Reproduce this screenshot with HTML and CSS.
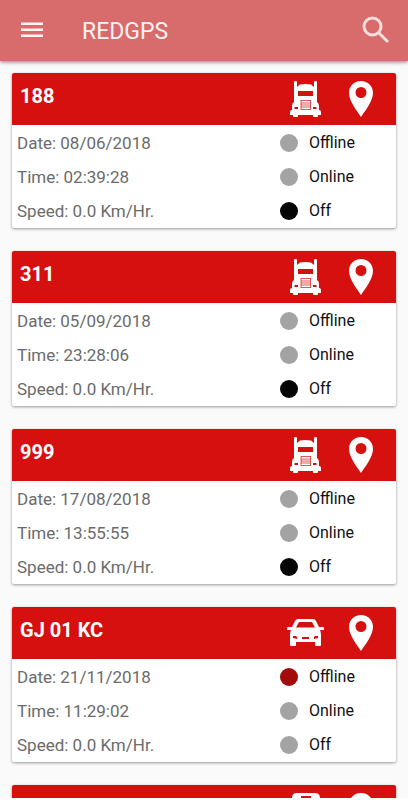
FILE: index.html
```
<!DOCTYPE html>
<html lang="en">
<head>
    <meta charset="UTF-8">
    <meta name="viewport" content="width=device-width, initial-scale=1.0">
    <title>REDGPS</title>
    <link rel="stylesheet" href="styles.css">
</head>
<body>
    <!-- Shared icons -->
    <svg class="icon-sprite" aria-hidden="true">
        <symbol id="icon-truck" viewBox="0 0 31 36">
            <path fill-rule="evenodd" d="M4 1Q4 0 5.500 0T7 1V6L10 3.500Q15.500 2.500 21 3.500L24 6V1Q24 0 25.500 0T27 1V21Q29 22 29 25V29Q31 29 31 31V34H28V35Q28 36 27 36H24Q23 36 23 35V34H8V35Q8 36 7 36H4Q3 36 3 35V34H0V31Q0 29 2 29V25Q2 22 4 21ZM8 10V15H23V10ZM4.500 26V28H8V26ZM23 26V28H26.500V26Z"/>
            <path class="grille" d="M11 19.500H20.500M11 22H20.500M11 24H20.500M11 26H20.500M11 28.500H20.500M11 19V29M20.500 19V29"/>
        </symbol>
        <symbol id="icon-car" viewBox="0 0 37 28">
            <path fill-rule="evenodd" d="M11 0H26Q28 0 29 2L32 8L33 8H36Q37 8 37 9V11H33Q34 13 34 16V26Q34 27 33 27H29Q28 27 28 26V23H9V26Q9 27 8 27H4Q3 27 3 26V16Q3 13 4 11H0V9Q0 8 1 8H5L8 2Q9 0 11 0ZM12 3L9 8.500H28L25 3ZM6 17V19L10 20Q11 18 9 17ZM28 17Q26 18 27 20L31 19V17ZM15 18V20H22V18Z"/>
        </symbol>
        <symbol id="icon-bus" viewBox="0 0 28 36">
            <path fill-rule="evenodd" d="M5 0H23Q28 0 28 5V30H26V34Q26 36 24 36T22 34V31H6V34Q6 36 4 36T2 34V30H0V5Q0 0 5 0ZM9 3V5H19V3ZM4 8V18H24V8ZM4 23V26H8V23ZM20 23V26H24V23Z"/>
        </symbol>
        <symbol id="icon-pin" viewBox="0 0 24 36">
            <path fill-rule="evenodd" d="M12 0C5 0 0 5 0 12C0 20 8 30 12 36C16 30 24 20 24 12C24 5 19 0 12 0ZM12 6A5.500 5.500 0 1 1 12 17A5.500 5.500 0 1 1 12 6Z"/>
        </symbol>
    </svg>

    <div class="screen">
        <!-- App Bar -->
        <header class="app-bar">
            <button class="bar-btn" type="button" aria-label="Open menu">
                <svg width="22" height="16" viewBox="0 0 22 16">
                    <path d="M0 0.500H22V3H0ZM0 6.500H22V9H0ZM0 12.500H22V15H0Z"/>
                </svg>
            </button>
            <h1 class="app-title">REDGPS</h1>
            <button class="bar-btn search-btn" type="button" aria-label="Search">
                <svg width="28" height="28" viewBox="0 0 28 28">
                    <circle cx="10.500" cy="10.500" r="8.500"/>
                    <path d="M16.500 16.500L26 26"/>
                </svg>
            </button>
        </header>

        <!-- Vehicle List -->
        <main class="vehicle-list">
            <article class="card">
                <div class="card-header">
                    <h2 class="card-title">188</h2>
                    <svg class="vehicle-icon" width="31" height="36"><use href="#icon-truck"/></svg>
                    <button class="pin-btn" type="button" aria-label="Show 188 on map"><svg width="24" height="36"><use href="#icon-pin"/></svg></button>
                </div>
                <div class="card-body">
                    <div class="details">
                        <p>Date: 08/06/2018</p>
                        <p>Time: 02:39:28</p>
                        <p>Speed: 0.0 Km/Hr.</p>
                    </div>
                    <ul class="status-list">
                        <li><span class="dot"></span>Offline</li>
                        <li><span class="dot"></span>Online</li>
                        <li><span class="dot dot-off"></span>Off</li>
                    </ul>
                </div>
            </article>

            <article class="card">
                <div class="card-header">
                    <h2 class="card-title">311</h2>
                    <svg class="vehicle-icon" width="31" height="36"><use href="#icon-truck"/></svg>
                    <button class="pin-btn" type="button" aria-label="Show 311 on map"><svg width="24" height="36"><use href="#icon-pin"/></svg></button>
                </div>
                <div class="card-body">
                    <div class="details">
                        <p>Date: 05/09/2018</p>
                        <p>Time: 23:28:06</p>
                        <p>Speed: 0.0 Km/Hr.</p>
                    </div>
                    <ul class="status-list">
                        <li><span class="dot"></span>Offline</li>
                        <li><span class="dot"></span>Online</li>
                        <li><span class="dot dot-off"></span>Off</li>
                    </ul>
                </div>
            </article>

            <article class="card">
                <div class="card-header">
                    <h2 class="card-title">999</h2>
                    <svg class="vehicle-icon" width="31" height="36"><use href="#icon-truck"/></svg>
                    <button class="pin-btn" type="button" aria-label="Show 999 on map"><svg width="24" height="36"><use href="#icon-pin"/></svg></button>
                </div>
                <div class="card-body">
                    <div class="details">
                        <p>Date: 17/08/2018</p>
                        <p>Time: 13:55:55</p>
                        <p>Speed: 0.0 Km/Hr.</p>
                    </div>
                    <ul class="status-list">
                        <li><span class="dot"></span>Offline</li>
                        <li><span class="dot"></span>Online</li>
                        <li><span class="dot dot-off"></span>Off</li>
                    </ul>
                </div>
            </article>

            <article class="card">
                <div class="card-header">
                    <h2 class="card-title">GJ 01 KC</h2>
                    <svg class="vehicle-icon" width="37" height="28"><use href="#icon-car"/></svg>
                    <button class="pin-btn" type="button" aria-label="Show GJ 01 KC on map"><svg width="24" height="36"><use href="#icon-pin"/></svg></button>
                </div>
                <div class="card-body">
                    <div class="details">
                        <p>Date: 21/11/2018</p>
                        <p>Time: 11:29:02</p>
                        <p>Speed: 0.0 Km/Hr.</p>
                    </div>
                    <ul class="status-list">
                        <li><span class="dot dot-offline"></span>Offline</li>
                        <li><span class="dot"></span>Online</li>
                        <li><span class="dot"></span>Off</li>
                    </ul>
                </div>
            </article>

            <article class="card">
                <div class="card-header">
                    <svg class="vehicle-icon" width="28" height="36"><use href="#icon-bus"/></svg>
                    <button class="pin-btn" type="button" aria-label="Show on map"><svg width="24" height="36"><use href="#icon-pin"/></svg></button>
                </div>
            </article>
        </main>
    </div>
</body>
</html>
```
FILE: styles.css
```
* {
    margin: 0;
    padding: 0;
    box-sizing: border-box;
}

body {
    background: #fff;
    color: #111;
    font-family: Roboto, sans-serif;
    font-size: 16px;
}

button {
    background: transparent;
    border: none;
    color: inherit;
    cursor: pointer;
}

svg {
    display: block;
    fill: currentColor;
}

.icon-sprite {
    display: none;
}

.grille {
    fill: none;
    stroke: #d60f0f;
    stroke-width: 1px;
    opacity: 0.7;
}

.screen {
    display: flex;
    flex-direction: column;
    height: calc(100vh - 2px);
    overflow: hidden;
    background: #fafafa;
}

/* App Bar */
.app-bar {
    display: flex;
    align-items: center;
    flex-shrink: 0;
    height: 61px;
    padding: 0 18px 2px 21px;
    background: #d86b6b;
    color: #fdf3f3;
    box-shadow: 0 1px 4px rgba(0, 0, 0, 0.5);
}

.search-btn svg {
    fill: none;
    stroke: #f8dfdf;
    stroke-width: 3px;
}

.app-title {
    flex: 1;
    padding: 3px 0 0 39px;
    font-size: 23px;
    font-weight: 400;
}

/* Vehicle Cards */
.vehicle-list {
    display: flex;
    flex-direction: column;
    gap: 23px;
    flex: 1;
    min-height: 0;
    padding: 12px;
    overflow: hidden;
}

.card {
    flex-shrink: 0;
    background: #fff;
    border-radius: 2px;
    box-shadow: 0 1px 3px rgba(0, 0, 0, 0.4);
}

.card-header {
    display: grid;
    grid-template-columns: 1fr 41px 70px;
    align-items: center;
    height: 52px;
    padding-left: 8px;
    background: #d60f0f;
    color: #fff;
    border-radius: 2px 2px 0 0;
}

.card-title {
    padding-bottom: 6px;
    font-size: 20px;
    font-weight: 700;
}

.vehicle-icon {
    grid-column: 2;
    justify-self: center;
}

.pin-btn {
    justify-self: center;
}

.card-body {
    display: grid;
    grid-template-columns: 1fr 116px;
    padding: 1px 0 0 5px;
    line-height: 34px;
}

.details {
    color: #6b6b6b;
    font-size: 17px;
}

.status-list {
    list-style: none;
}

.status-list li {
    display: flex;
    align-items: center;
    gap: 11px;
}

.dot {
    width: 18px;
    height: 18px;
    border-radius: 50%;
    background: #a3a3a3;
}

.dot-off {
    background: #050505;
}

.dot-offline {
    background: #a30a0a;
}
```
